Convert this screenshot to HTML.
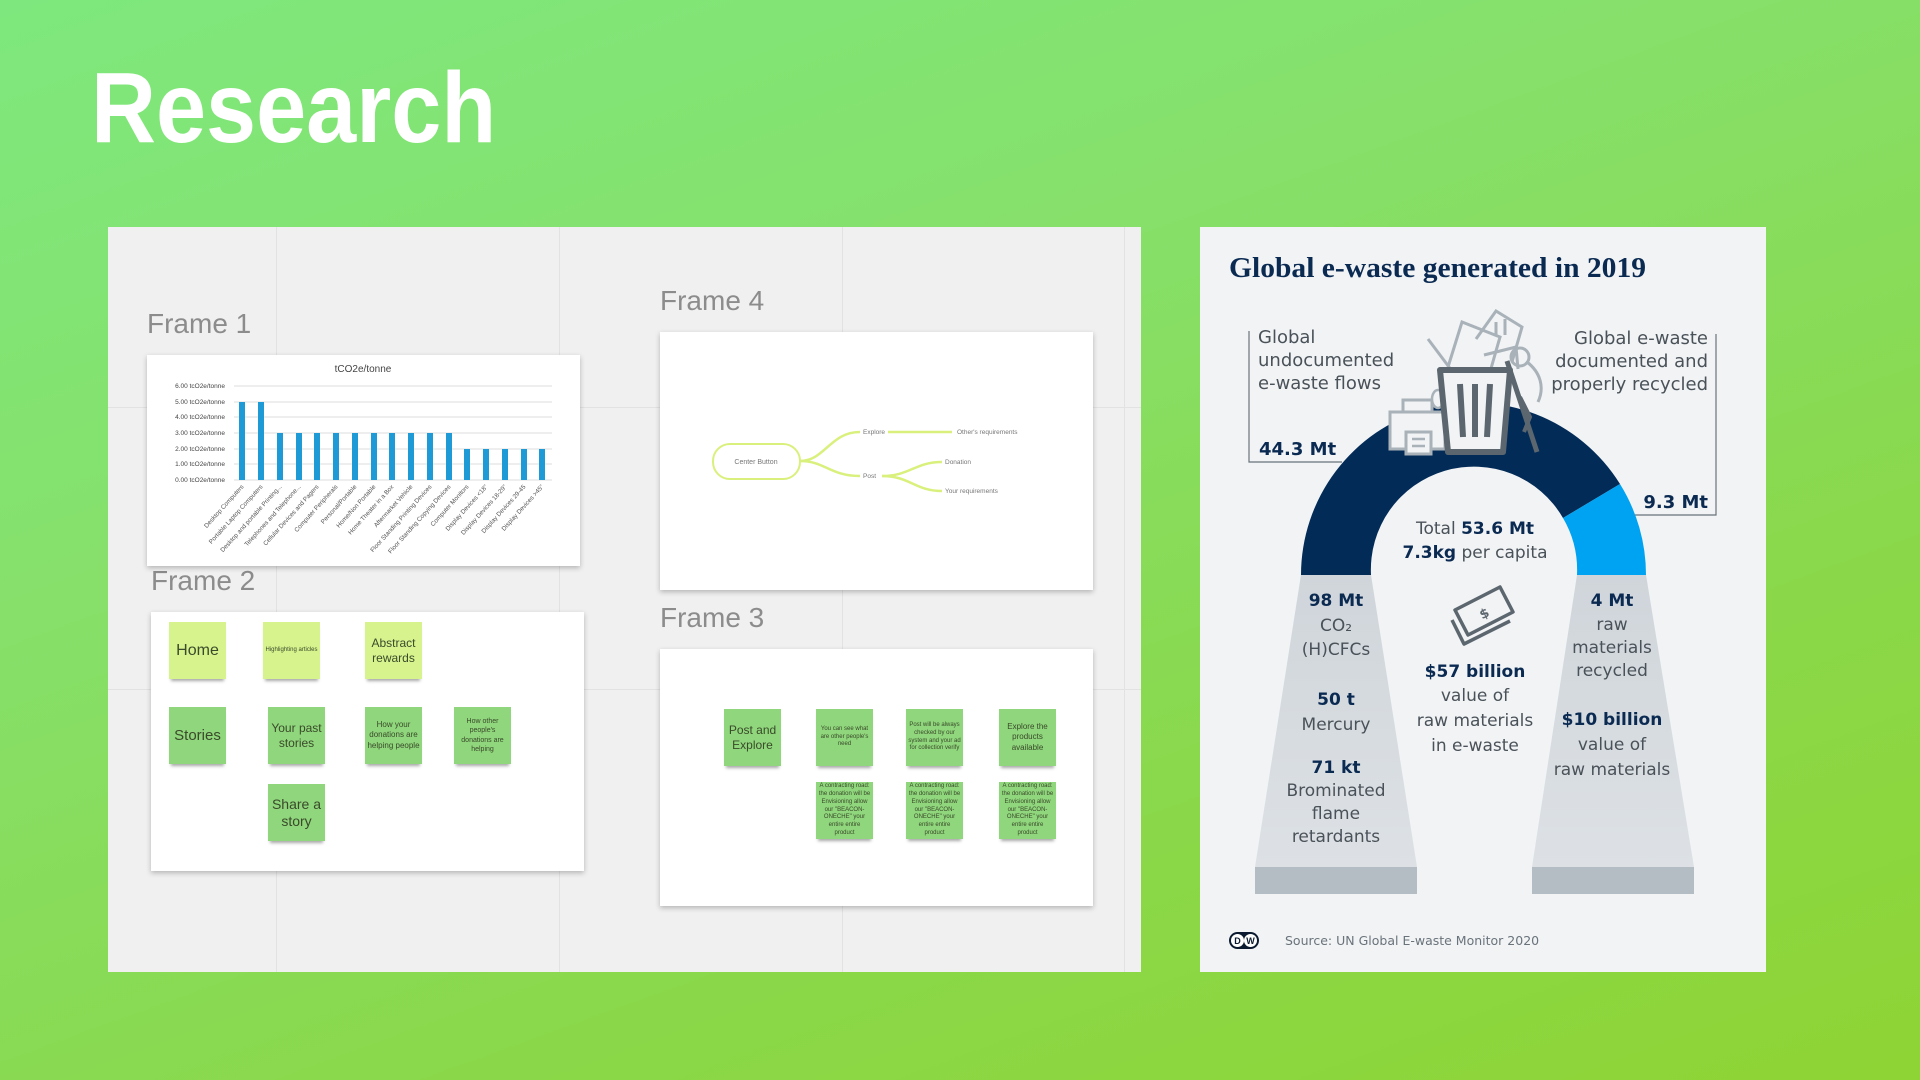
<!DOCTYPE html>
<html><head><meta charset="utf-8"><style>
*{margin:0;padding:0;box-sizing:border-box}
body{width:1920px;height:1080px;overflow:hidden;position:relative;background:linear-gradient(160deg,#7ee87e 0%,#86e06a 35%,#8ad84a 70%,#8ed434 100%);font-family:"Liberation Sans",sans-serif}
.title{position:absolute;left:91px;top:58px;font-size:100px;line-height:1;font-weight:bold;color:#fff;transform:scaleX(0.9);transform-origin:left top}
#lp{position:absolute;left:108px;top:227px;width:1033px;height:745px;background:#f0f0f0;overflow:hidden}
.vl{position:absolute;top:0;bottom:0;width:1px;background:#e2e2e2}
.hl{position:absolute;left:0;right:0;height:1px;background:#e2e2e2}
.fl{position:absolute;font-size:28px;color:#8c8c8c;line-height:1}
.card{position:absolute;background:#fff;box-shadow:0 2px 5px rgba(0,0,0,.25)}
.st{position:absolute;width:57px;height:57px;display:flex;align-items:center;justify-content:center;text-align:center;color:#3a4a2a;box-shadow:0 4px 3px -2px rgba(0,0,0,.35);line-height:1.2}
.lt{background:#d6f38e}.dk{background:#8fd67c}
.tiny{font-size:6px;line-height:1.3;padding:2px}
</style></head><body>
<div class="title">Research</div>
<div id="lp">
<div class="vl" style="left:168px"></div><div class="vl" style="left:451px"></div><div class="vl" style="left:734px"></div><div class="vl" style="left:1016px"></div>
<div class="hl" style="top:180px"></div><div class="hl" style="top:462px"></div>
<div class="fl" style="left:39px;top:83px">Frame 1</div>
<div class="fl" style="left:43px;top:340px">Frame 2</div>
<div class="fl" style="left:552px;top:60px">Frame 4</div>
<div class="fl" style="left:552px;top:377px">Frame 3</div>
<!-- frame1 -->
<div class="card" style="left:39px;top:128px;width:433px;height:211px">
<svg width="433" height="211" font-family="Liberation Sans,sans-serif">
<text x="216" y="17" font-size="10" text-anchor="middle" fill="#444">tCO2e/tonne</text>
<g stroke="#ddd" stroke-width="1">
<line x1="87" x2="405" y1="31" y2="31"/><line x1="87" x2="405" y1="47" y2="47"/><line x1="87" x2="405" y1="62" y2="62"/><line x1="87" x2="405" y1="78" y2="78"/><line x1="87" x2="405" y1="94" y2="94"/><line x1="87" x2="405" y1="109" y2="109"/><line x1="87" x2="405" y1="125" y2="125"/></g>
<g font-size="6.5" fill="#444" text-anchor="end">
<text x="78" y="33">6.00 tcO2e/tonne</text><text x="78" y="49">5.00 tcO2e/tonne</text><text x="78" y="64">4.00 tcO2e/tonne</text><text x="78" y="80">3.00 tcO2e/tonne</text><text x="78" y="96">2.00 tcO2e/tonne</text><text x="78" y="111">1.00 tcO2e/tonne</text><text x="78" y="127">0.00 tcO2e/tonne</text></g>
<g fill="#1e9ad6">
<rect x="92" y="47" width="6" height="78"/><rect x="111" y="47" width="6" height="78"/>
<rect x="130" y="78" width="6" height="47"/><rect x="149" y="78" width="6" height="47"/><rect x="167" y="78" width="6" height="47"/><rect x="186" y="78" width="6" height="47"/><rect x="205" y="78" width="6" height="47"/><rect x="224" y="78" width="6" height="47"/><rect x="242" y="78" width="6" height="47"/><rect x="261" y="78" width="6" height="47"/><rect x="280" y="78" width="6" height="47"/><rect x="299" y="78" width="6" height="47"/>
<rect x="317" y="94" width="6" height="31"/><rect x="336" y="94" width="6" height="31"/><rect x="355" y="94" width="6" height="31"/><rect x="374" y="94" width="6" height="31"/><rect x="392" y="94" width="6" height="31"/></g>
<g font-size="6.3" fill="#555" text-anchor="end">
<text transform="translate(97,132) rotate(-48)">Desktop Computers</text>
<text transform="translate(116,132) rotate(-48)">Portable Laptop Computers</text>
<text transform="translate(135,132) rotate(-48)">Desktop and portable Printing...</text>
<text transform="translate(154,132) rotate(-48)">Telephones and Telephone...</text>
<text transform="translate(172,132) rotate(-48)">Cellular Devices and Pagers</text>
<text transform="translate(191,132) rotate(-48)">Computer Peripherals</text>
<text transform="translate(210,132) rotate(-48)">Personal/Portable</text>
<text transform="translate(229,132) rotate(-48)">Home/Non Portable</text>
<text transform="translate(247,132) rotate(-48)">Home Theater in a Box</text>
<text transform="translate(266,132) rotate(-48)">Aftermarket Vehicle</text>
<text transform="translate(285,132) rotate(-48)">Floor Standing Printing Devices</text>
<text transform="translate(304,132) rotate(-48)">Floor Standing Copying Devices</text>
<text transform="translate(322,132) rotate(-48)">Computer Monitors</text>
<text transform="translate(341,132) rotate(-48)">Display Devices &lt;18"</text>
<text transform="translate(360,132) rotate(-48)">Display Devices 18-29"</text>
<text transform="translate(379,132) rotate(-48)">Display Devices 29-45</text>
<text transform="translate(397,132) rotate(-48)">Display Devices &gt;45"</text>
</g></svg></div>
<!-- frame2 -->
<div class="card" style="left:43px;top:385px;width:433px;height:259px"></div>
<div class="st lt" style="left:61px;top:395px;font-size:16px">Home</div>
<div class="st lt tiny" style="left:155px;top:395px">Highlighting articles</div>
<div class="st lt" style="left:257px;top:395px;font-size:12px">Abstract rewards</div>
<div class="st dk" style="left:61px;top:480px;font-size:15px">Stories</div>
<div class="st dk" style="left:160px;top:480px;font-size:12px">Your past stories</div>
<div class="st dk tiny" style="left:257px;top:480px;font-size:8px">How your donations are helping people</div>
<div class="st dk tiny" style="left:346px;top:480px;font-size:7px">How other people's donations are helping</div>
<div class="st dk" style="left:160px;top:557px;font-size:14px">Share a story</div>
<!-- frame4 -->
<div class="card" style="left:552px;top:105px;width:433px;height:258px">
<svg width="433" height="258" font-family="Liberation Sans,sans-serif">
<rect x="53" y="112" width="87" height="35" rx="17" fill="none" stroke="#d9f07c" stroke-width="2"/>
<text x="96" y="132" font-size="7" fill="#777" text-anchor="middle">Center Button</text>
<g fill="none" stroke="#d9f07c" stroke-width="2.5">
<path d="M140 129 C165 129 170 100 200 100"/><path d="M140 129 C165 129 170 144 200 144"/>
<path d="M228 100 L292 100"/><path d="M222 144 C250 144 255 130 282 130"/><path d="M222 144 C250 144 255 159 282 159"/></g>
<g font-size="6.5" fill="#777"><text x="203" y="102">Explore</text><text x="297" y="102">Other's requirements</text><text x="203" y="146">Post</text><text x="285" y="132">Donation</text><text x="285" y="161">Your requirements</text></g>
</svg></div>
<!-- frame3 -->
<div class="card" style="left:552px;top:422px;width:433px;height:257px"></div>
<div class="st dk" style="left:616px;top:482px;font-size:12px">Post and Explore</div>
<div class="st dk tiny" style="left:708px;top:482px">You can see what are other people's need</div>
<div class="st dk tiny" style="left:798px;top:482px">Post will be always checked by our system and your ad for collection verify</div>
<div class="st dk tiny" style="left:891px;top:482px;font-size:8px">Explore the products available</div>
<div class="st dk tiny" style="left:708px;top:555px">A contracting road: the donation will be Envisioning allow our "BEACON-ONECHE" your entire entire product</div>
<div class="st dk tiny" style="left:798px;top:555px">A contracting road: the donation will be Envisioning allow our "BEACON-ONECHE" your entire entire product</div>
<div class="st dk tiny" style="left:891px;top:555px">A contracting road: the donation will be Envisioning allow our "BEACON-ONECHE" your entire entire product</div>
</div>
<!-- right panel -->
<svg style="position:absolute;left:1200px;top:227px" width="566" height="745" viewBox="0 0 566 745">
<rect width="566" height="745" fill="#f1f3f5"/>
<text x="29" y="50" font-family="Liberation Serif,serif" font-weight="bold" font-size="28" fill="#0b2a52" textLength="417" lengthAdjust="spacingAndGlyphs">Global e-waste generated in 2019</text>
<g fill="none" stroke="#6a737b" stroke-width="1.2"><path d="M49 104 V235 H142"/><path d="M516 107 V288 H435"/></g>
<g font-family="DejaVu Sans,sans-serif" font-size="18" fill="#4a5259">
<text x="58" y="116">Global</text><text x="58" y="139">undocumented</text><text x="58" y="162">e-waste flows</text>
<g text-anchor="end"><text x="508" y="117">Global e-waste</text><text x="508" y="140">documented and</text><text x="508" y="163">properly recycled</text></g>
</g>
<g font-family="DejaVu Sans,sans-serif" font-weight="bold" font-size="18" fill="#0b2a52">
<text x="59" y="228">44.3 Mt</text><text x="508" y="281" text-anchor="end">9.3 Mt</text></g>
<!-- legs -->
<defs><linearGradient id="lg" x1="0" y1="0" x2="0" y2="1"><stop offset="0" stop-color="#cfd5da"/><stop offset="1" stop-color="#dde1e5"/></linearGradient></defs>
<path d="M101 348 H171 L217 640 H55 Z" fill="url(#lg)"/>
<rect x="55" y="640" width="162" height="27" fill="#b4bcc4"/>
<path d="M377 348 H446 L494 640 H332 Z" fill="url(#lg)"/>
<rect x="332" y="640" width="162" height="27" fill="#b4bcc4"/>
<!-- arc -->
<path d="M101 348 A172.5 172.5 0 0 1 420 257 L363 291 A103 103 0 0 0 171 348 Z" fill="#022b57"/>
<path d="M420 257 A172.5 172.5 0 0 1 446 348 L377 348 A103 103 0 0 0 363 291 Z" fill="#00a2f2"/>
<!-- trash icon -->
<g fill="none" stroke="#a9b2b9" stroke-width="3">
<path d="M248 140 L262 95 L300 110 L290 145"/><path d="M276 112 L296 84 L322 100 L312 135"/><path d="M296 95 v14 M305 92 v16"/><path d="M284 128 L316 120 L318 142"/>
<path d="M228 112 L252 144"/><circle cx="320" cy="130" r="9"/><path d="M327 135 C340 145 345 160 338 175"/></g>
<path d="M190 185 H245 V222 H190 Z" fill="#f1f3f5" stroke="#a9b2b9" stroke-width="3"/>
<path d="M203 173 H232 V185 H203 Z" fill="#f1f3f5" stroke="#a9b2b9" stroke-width="3"/>
<rect x="206" y="205" width="25" height="22" fill="#f1f3f5" stroke="#a9b2b9" stroke-width="3"/>
<path d="M212 212 h13 M212 219 h13" stroke="#a9b2b9" stroke-width="2.5"/>
<ellipse cx="238" cy="172" rx="6" ry="9" fill="#f1f3f5" stroke="#a9b2b9" stroke-width="2.5"/>
<path d="M240 143 H310 L303 225 H248 Z" fill="#f1f3f5" stroke="#5c666e" stroke-width="6" stroke-linejoin="round"/>
<path d="M260 157 L263 210 M275 157 V210 M290 157 L287 210" stroke="#5c666e" stroke-width="6"/>
<path d="M307 134 L337 225" stroke="#5c666e" stroke-width="5"/>
<path d="M320 170 L330 190 L324 205" fill="none" stroke="#5c666e" stroke-width="4"/>
<!-- texts -->
<g font-family="DejaVu Sans,sans-serif" font-size="17" fill="#4a5259" text-anchor="middle">
<text x="136" y="379" font-weight="bold" fill="#0b2a52">98 Mt</text>
<text x="136" y="404">CO₂</text><text x="136" y="428">(H)CFCs</text>
<text x="136" y="478" font-weight="bold" fill="#0b2a52">50 t</text>
<text x="136" y="503">Mercury</text>
<text x="136" y="546" font-weight="bold" fill="#0b2a52">71 kt</text>
<text x="136" y="569">Brominated</text><text x="136" y="592">flame</text><text x="136" y="615">retardants</text>
<text x="275" y="307">Total <tspan font-weight="bold" fill="#0b2a52">53.6 Mt</tspan></text>
<text x="275" y="331"><tspan font-weight="bold" fill="#0b2a52">7.3kg</tspan> per capita</text>
<text x="275" y="450" font-weight="bold" fill="#0b2a52">$57 billion</text>
<text x="275" y="474">value of</text><text x="275" y="499">raw materials</text><text x="275" y="524">in e-waste</text>
<text x="412" y="379" font-weight="bold" fill="#0b2a52">4 Mt</text>
<text x="412" y="403">raw</text><text x="412" y="426">materials</text><text x="412" y="449">recycled</text>
<text x="412" y="498" font-weight="bold" fill="#0b2a52">$10 billion</text>
<text x="412" y="523">value of</text><text x="412" y="548">raw materials</text>
</g>
<!-- money icon -->
<g fill="none" stroke="#5c666e" stroke-width="3.5" stroke-linejoin="round">
<path d="M255 383 L300 360 L313 385 L268 408 Z"/>
<path d="M252 393 L264 417 L310 394"/>
</g>
<text x="284" y="391" font-family="DejaVu Sans,sans-serif" font-weight="bold" font-size="13" fill="#5c666e" text-anchor="middle" transform="rotate(-27 284 386)">$</text>
<!-- DW logo -->
<rect x="29" y="705" width="30" height="17" rx="8.5" fill="#0b1a2e"/>
<circle cx="37.5" cy="713.5" r="6.5" fill="#fff"/><circle cx="50.5" cy="713.5" r="6.5" fill="#fff"/>
<text x="37.5" y="717" font-family="Liberation Sans,sans-serif" font-weight="bold" font-size="9" text-anchor="middle" fill="#0b1a2e">D</text>
<text x="50.5" y="717" font-family="Liberation Sans,sans-serif" font-weight="bold" font-size="9" text-anchor="middle" fill="#0b1a2e">W</text>
<text x="85" y="718" font-family="DejaVu Sans,sans-serif" font-size="12.5" fill="#6a737b">Source: UN Global E-waste Monitor 2020</text>
</svg>
</body></html>
